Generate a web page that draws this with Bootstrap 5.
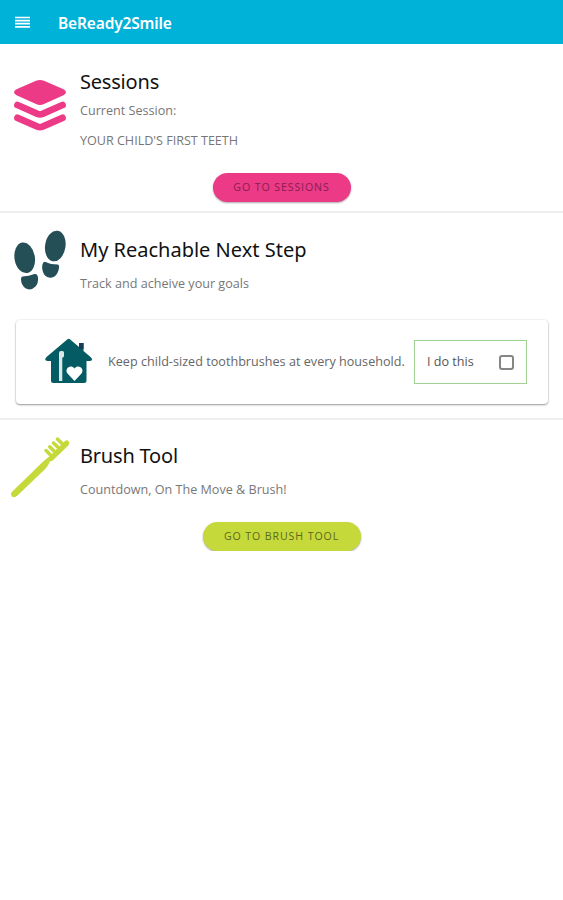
<!DOCTYPE html>
<html lang="en">
<head>
<meta charset="utf-8">
<meta name="viewport" content="width=device-width, initial-scale=1">
<title>BeReady2Smile</title>
<link href="https://cdn.jsdelivr.net/npm/bootstrap@5.3.0/dist/css/bootstrap.min.css" rel="stylesheet">
<style>
body{font-family:"Open Sans","Noto Sans",sans-serif;font-size:12.6px;color:#666;background:#fff}
.app-bar{height:44px;background:#00b2d8;padding:0 14px}
.app-name{font:600 15.5px/20px "Noto Sans",sans-serif;letter-spacing:-.15px;color:#fff;margin:1px 0 0 27px}
.panel{border-bottom:2px solid #eee}
.panel-sessions{height:169px;padding-top:25px}
.panel-step{height:207px;padding-top:16px}
.panel-brush{padding-top:15px}
.art{width:80px;flex:none}
.art svg,.house svg,.menu-btn svg{display:block}
.heading{font:400 20px/26px "Noto Sans",sans-serif;color:#111;margin:0}
.heading-short{letter-spacing:-.2px}
.line{line-height:18px;margin:12px 0 0;color:#777;white-space:nowrap}
.line-near{margin-top:7px}
.line-caps{letter-spacing:-.02px}
.pill{border:0;border-radius:15px;height:29px;padding:0;font-size:10.6px;line-height:29px;letter-spacing:.9px;box-shadow:0 1px 2px rgba(0,0,0,.35)}
.pill-pink{width:138px;background:#ec3a87;color:#85204f}
.pill-lime{width:158px;background:#c5da3a;color:#5e681d}
.pill-row{padding-top:23px}
.pill-row-brush{padding-top:21px}
.goal-wrap{padding-top:27px}
.goal{height:84px;margin:0 15px 0 16px;border:0;border-radius:4px;box-shadow:0 1px 2px rgba(0,0,0,.38),0 0 2px rgba(0,0,0,.12)}
.goal-text{color:#666;white-space:nowrap;letter-spacing:.02px}
.do-this{width:113px;height:44px;margin-right:21px;border:1px solid #9fd293;padding:0 12px;color:#555}
.do-this .form-check-input{width:15px;height:15px;border:2px solid #858585;border-radius:3px;margin:0}
</style>
<script src="https://cdn.jsdelivr.net/npm/bootstrap@5.3.0/dist/js/bootstrap.bundle.min.js"></script>
</head>
<body>
<header class="app-bar d-flex align-items-center">
  <button class="menu-btn btn p-0 border-0" type="button" aria-label="Menu">
    <svg width="17" height="12" viewBox="0 0 17 12" fill="none" stroke="#fff" stroke-width="1.7"><path d="M1 1.500h15M1 4.600h15M1 7.700h15M1 10.800h15"/></svg>
  </button>
  <h1 class="app-name">BeReady2Smile</h1>
</header>
<main>
  <section class="panel panel-sessions">
    <div class="d-flex">
      <div class="art">
        <svg width="80" height="66" viewBox="0 0 80 66" fill="#ec3a87">
          <path d="M36 11.800Q40 10 44 11.800L63.500 20.300Q68.500 23.300 63.500 26.300L44 35Q40 36.800 36 35L16.500 26.300Q11.500 23.300 16.500 20.300Z"/>
          <g fill="none" stroke="#ec3a87" stroke-width="6.800" stroke-linecap="round" stroke-linejoin="round"><path d="M17.500 36L37.500 44.800Q40 45.800 42.500 44.800L62.500 36"/><path d="M17.500 48.800L37.500 57.600Q40 58.600 42.500 57.600L62.500 48.800"/></g>
        </svg>
      </div>
      <div>
        <h2 class="heading heading-short">Sessions</h2>
        <p class="line line-near">Current Session:</p>
        <p class="line line-caps">YOUR CHILD'S FIRST TEETH</p>
      </div>
    </div>
    <div class="pill-row d-flex justify-content-center"><button class="btn pill pill-pink" type="button">GO TO SESSIONS</button></div>
  </section>
  <section class="panel panel-step">
    <div class="d-flex">
      <div class="art">
        <svg width="80" height="64" viewBox="0 0 80 64" fill="#254f57">
          <ellipse cx="24.700" cy="28.800" rx="10.200" ry="15.400" transform="rotate(-9 24.700 28.800)"/>
          <ellipse cx="55.300" cy="17" rx="10.200" ry="15.400" transform="rotate(9 55.300 17)"/>
          <path d="M22.500 47.500Q29 47.300 34.500 45Q37.500 44.500 38 48.500Q38.500 54 35.500 57.500Q30.500 62.500 25 59Q21 55.500 21 50Q21 47.700 22.500 47.500Z"/>
          <path d="M45.500 33Q50.500 35.500 57.500 35.600Q59.500 36 59 39Q58 45 54.500 47.500Q48.500 50.500 44.500 46Q41.500 41 42.300 36Q43.300 32 45.500 33Z"/>
        </svg>
      </div>
      <div class="pt-2">
        <h2 class="heading">My Reachable Next Step</h2>
        <p class="line">Track and acheive your goals</p>
      </div>
    </div>
    <div class="goal-wrap">
      <div class="card goal flex-row align-items-center">
        <div class="house">
          <svg width="92" height="54" viewBox="0 0 92 54">
            <path d="M51.500 4.200L30.500 22Q27.500 25.500 31.500 26H35V45.500Q35 48 37.500 48H68Q70.500 48 70.500 45.500V26H74Q78 25.500 74.500 22L67.500 16V8H63V12L54.500 4.700Q53 3 51.500 4.200Z" fill="#045b64"/>
            <path d="M63 8h4.500v6H63z" fill="#173e52"/>
            <path d="M43 18q0-2 2-2h1.500q1.500 0 1.500 1.500V21q0 1.500-1.700 1.500V46H43Z" fill="#dbe6e8"/>
            <path d="M58.500 46L51.500 38.500C48 34 54.500 28.500 58.500 33.500C62.500 28.500 69 34 65.500 38.500Z" fill="#fff"/>
          </svg>
        </div>
        <span class="goal-text">Keep child-sized toothbrushes at every household.</span>
        <label class="do-this d-flex align-items-center justify-content-between ms-auto"><span>I do this</span><input class="form-check-input" type="checkbox"></label>
      </div>
    </div>
  </section>
  <section class="panel-brush">
    <div class="d-flex">
      <div class="art">
        <svg width="80" height="66" viewBox="0 0 80 66" fill="none" stroke="#c5da3a" stroke-linecap="round">
          <path d="M11.800 57L37 32.500Q45 24.500 49 21.800L64.500 6.500Q67 4 68.800 6.300Q70.300 8.500 68.500 10.300L54 24.300Q52.500 26.500 50 26.200Q48 32 41 38L17.500 60.500Q14 63.500 11.700 61.300Q10 59 11.800 57Z" fill="#c5da3a" stroke="none"/>
          <path d="M46 15.500L50 19.500M49.700 11.800L54 16M53.500 8L58 12.200M57.500 4L62 8.500" stroke-width="3.500"/>
        </svg>
      </div>
      <div class="pt-2">
        <h2 class="heading heading-short">Brush Tool</h2>
        <p class="line">Countdown, On The Move &amp; Brush!</p>
      </div>
    </div>
    <div class="pill-row-brush d-flex justify-content-center"><button class="btn pill pill-lime" type="button">GO TO BRUSH TOOL</button></div>
  </section>
</main>
</body>
</html>
